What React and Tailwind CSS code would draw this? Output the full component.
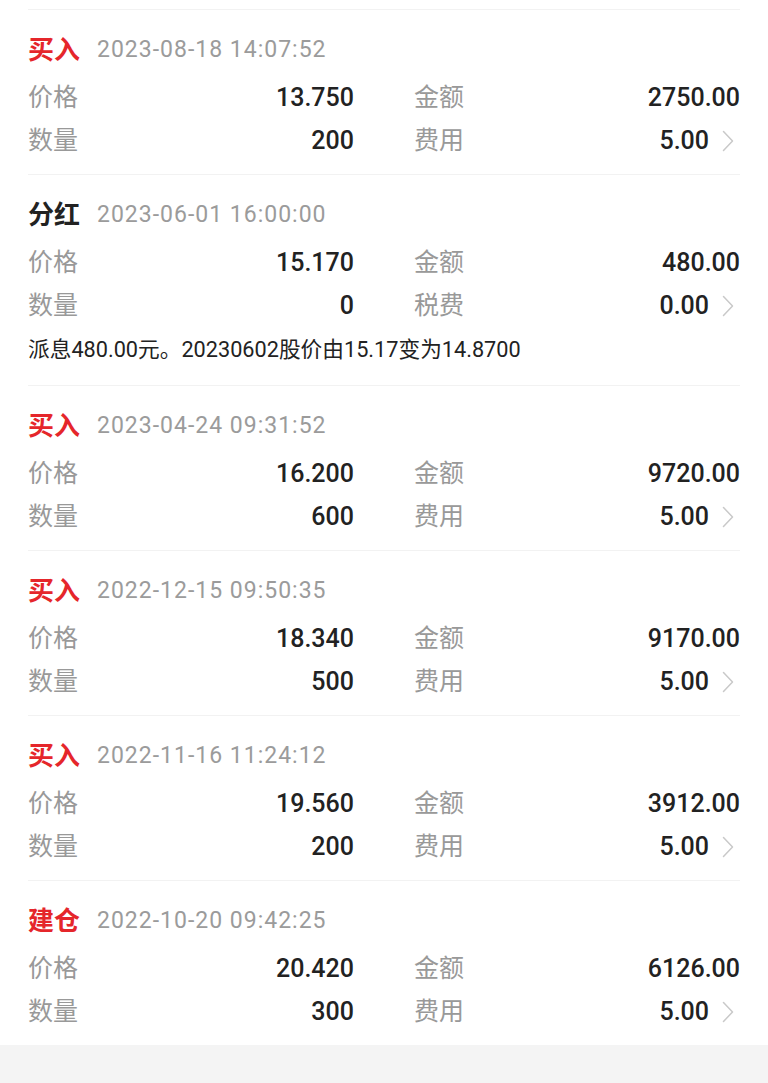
import React from "react";

const records = [
  { type: "买入", red: true, time: "2023-08-18 14:07:52", price: "13.750", amount: "2750.00", qty: "200", feeLabel: "费用", fee: "5.00" },
  {
    type: "分红",
    red: false,
    time: "2023-06-01 16:00:00",
    price: "15.170",
    amount: "480.00",
    qty: "0",
    feeLabel: "税费",
    fee: "0.00",
    note: "派息480.00元。20230602股价由15.17变为14.8700",
  },
  { type: "买入", red: true, time: "2023-04-24 09:31:52", price: "16.200", amount: "9720.00", qty: "600", feeLabel: "费用", fee: "5.00" },
  { type: "买入", red: true, time: "2022-12-15 09:50:35", price: "18.340", amount: "9170.00", qty: "500", feeLabel: "费用", fee: "5.00" },
  { type: "买入", red: true, time: "2022-11-16 11:24:12", price: "19.560", amount: "3912.00", qty: "200", feeLabel: "费用", fee: "5.00" },
  { type: "建仓", red: true, time: "2022-10-20 09:42:25", price: "20.420", amount: "6126.00", qty: "300", feeLabel: "费用", fee: "5.00" },
];

function Chevron() {
  return (
    <svg width="12" height="22" viewBox="0 0 12 22" className="ml-[13px] mr-[6px] shrink-0">
      <path d="M1.5 1.5 L10.5 11 L1.5 20.5" fill="none" stroke="#c9c9c9" strokeWidth="1.5" strokeLinecap="round" strokeLinejoin="round" />
    </svg>
  );
}

function Cell({ label, value, arrow }) {
  return (
    <div className="flex items-center">
      <span className="text-[25px] text-[#999999]">{label}</span>
      <span className="ml-auto font-['Roboto'] text-[25px] font-medium text-[#222222]">{value}</span>
      {arrow && <Chevron />}
    </div>
  );
}

function Record({ r }) {
  return (
    <div className="border-t border-[#f2f2f2] pt-[22px] pb-[12px]">
      <div className="flex h-[36px] items-center">
        <span className={"text-[26px] font-bold " + (r.red ? "text-[#e5262b]" : "text-[#222222]")}>{r.type}</span>
        <span className="ml-[17px] font-['Roboto'] text-[23px] tracking-[1px] text-[#9b9b9b]">{r.time}</span>
      </div>
      <div className="mt-[8px] grid grid-cols-2 gap-x-[60px]">
        <div className="flex h-[43px] flex-col justify-center">
          <Cell label="价格" value={r.price} />
        </div>
        <div className="flex h-[43px] flex-col justify-center">
          <Cell label="金额" value={r.amount} />
        </div>
        <div className="flex h-[43px] flex-col justify-center">
          <Cell label="数量" value={r.qty} />
        </div>
        <div className="flex h-[43px] flex-col justify-center">
          <Cell label={r.feeLabel} value={r.fee} arrow />
        </div>
      </div>
      {r.note && (
        <div className="flex h-[46px] items-center text-[21.7px] text-[#222222]">{r.note}</div>
      )}
    </div>
  );
}

export default function App() {
  return (
    <div className="min-h-screen bg-[#f4f4f4] font-['Roboto','Noto_Sans_CJK_SC',sans-serif]">
      <div className="bg-white px-[28px] pt-[9px]">
        {records.map((r, i) => (
          <Record key={i} r={r} />
        ))}
      </div>
    </div>
  );
}
